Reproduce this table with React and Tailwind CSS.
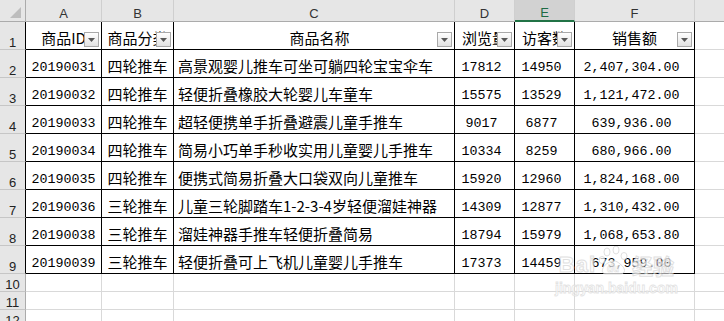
import React from "react";

const data = [
  ["20190031", "四轮推车", "高景观婴儿推车可坐可躺四轮宝宝伞车", "17812", "14950", "2,407,304.00"],
  ["20190032", "四轮推车", "轻便折叠橡胶大轮婴儿车童车", "15575", "13529", "1,121,472.00"],
  ["20190033", "四轮推车", "超轻便携单手折叠避震儿童手推车", "9017", "6877", "639,936.00"],
  ["20190034", "四轮推车", "简易小巧单手秒收实用儿童婴儿手推车", "10334", "8259", "680,966.00"],
  ["20190035", "四轮推车", "便携式简易折叠大口袋双向儿童推车", "15920", "12960", "1,824,168.00"],
  ["20190036", "三轮推车", "儿童三轮脚踏车1-2-3-4岁轻便溜娃神器", "14309", "12877", "1,310,432.00"],
  ["20190038", "三轮推车", "溜娃神器手推车轻便折叠简易", "18794", "15979", "1,068,653.80"],
  ["20190039", "三轮推车", "轻便折叠可上飞机儿童婴儿手推车", "17373", "14459", "673,959.00"],
];

function FilterBtn() {
  return (
    <span className="absolute right-[2px] bottom-[2px] w-[15px] h-[15px] border border-[#a9a9a9] bg-linear-to-b from-white to-[#e2e2e2] flex items-center justify-center">
      <svg width="7" height="4" viewBox="0 0 7 4">
        <path d="M0 0H7L3.5 4Z" fill="#585858" />
      </svg>
    </span>
  );
}

const colHead =
  "flex items-end justify-center pb-[1px] leading-[13px] text-[13px] font-['Liberation_Sans',sans-serif] text-[#333] bg-[#e6e6e6] border-r border-b border-r-[#cfcfcf] border-b-[#ababab]";
const rowHeadBase =
  "flex items-end justify-center leading-[13px] text-[13px] font-['Liberation_Sans',sans-serif] text-[#222] bg-[#e6e6e6] border-b border-b-[#c6c6c6] border-r";
const cjk = "font-['Noto_Sans_CJK_SC',sans-serif] text-[15px] leading-[18px] text-black";
const mono = "font-['Liberation_Mono','Noto_Sans_CJK_SC',monospace] text-[13.33px] leading-[18px] text-black";
const tcell = "relative overflow-hidden whitespace-nowrap flex items-end border-r border-b border-black";
const gcell = "border-r border-b border-[#d9d9d9]";

export default function App() {
  const letters = ["A", "B", "C", "D", "E", "F"];
  return (
    <div className="w-[724px] h-[321px] overflow-hidden bg-white relative">
      <div className="grid grid-cols-[26px_76px_72px_281px_60px_60px_120px_1fr] grid-rows-[22px_repeat(9,28px)_repeat(3,18px)]">
        {/* corner */}
        <div className="relative bg-[#e6e6e6] border-r border-b border-[#ababab]">
          <svg className="absolute right-[4px] bottom-[3px]" width="11" height="11" viewBox="0 0 11 11">
            <path d="M11 0V11H0Z" fill="#bdbdbd" />
          </svg>
        </div>
        {letters.map((l) =>
          l === "E" ? (
            <div
              key={l}
              className="flex items-end justify-center pb-[1px] leading-[13px] text-[13px] font-['Liberation_Sans',sans-serif] text-[#1d6b44] bg-[#d2d2d2] border-r border-r-[#cfcfcf] border-b-2 border-b-[#217346]"
            >
              {l}
            </div>
          ) : (
            <div key={l} className={colHead}>
              {l}
            </div>
          )
        )}
        <div className="bg-[#e6e6e6] border-b border-[#ababab]"></div>

        {/* row 1 headers */}
        <div className={rowHeadBase + " border-r-black"}>1</div>
        <div className={tcell + " justify-center pb-[2px] " + cjk}>
          商品ID
          <FilterBtn />
        </div>
        <div className={tcell + " justify-center pb-[2px] " + cjk}>
          商品分类
          <FilterBtn />
        </div>
        <div className={tcell + " justify-center pb-[2px] pl-[11px] " + cjk}>
          商品名称
          <FilterBtn />
        </div>
        <div className={tcell + " justify-center pb-[2px] " + cjk}>
          浏览量
          <FilterBtn />
        </div>
        <div className={tcell + " justify-center pb-[2px] " + cjk}>
          访客数
          <FilterBtn />
        </div>
        <div className={tcell + " justify-center pb-[2px] " + cjk}>
          销售额
          <FilterBtn />
        </div>
        <div className="border-b border-[#d9d9d9]"></div>

        {data.map((r, i) => (
          <React.Fragment key={r[0]}>
            <div className={rowHeadBase + " border-r-black"}>{i + 2}</div>
            <div className={tcell + " justify-center " + mono}>{r[0]}</div>
            <div className={tcell + " justify-center pb-[2px] " + cjk}>{r[1]}</div>
            <div className={tcell + " justify-start pl-[4px] pb-[2px] " + cjk}>{r[2]}</div>
            <div className={tcell + " justify-center pr-[6px] " + mono}>{r[3]}</div>
            <div className={tcell + " justify-center pr-[6px] " + mono}>{r[4]}</div>
            <div className={tcell + " justify-center pr-[6px] " + mono}>{r[5]}</div>
            <div className="border-b border-[#d9d9d9]"></div>
          </React.Fragment>
        ))}

        {[10, 11, 12].map((n) => (
          <React.Fragment key={n}>
            <div className={rowHeadBase + " border-r-[#ababab]"}>{n}</div>
            <div className={gcell}></div>
            <div className={gcell}></div>
            <div className={gcell}></div>
            <div className={gcell}></div>
            <div className={gcell}></div>
            <div className={gcell}></div>
            <div className="border-b border-[#d9d9d9]"></div>
          </React.Fragment>
        ))}
      </div>

      {/* watermark */}
      <div className="absolute left-[555px] top-[246px] flex flex-col items-center pointer-events-none opacity-75">
        <div className="flex items-end gap-[2px] font-['Liberation_Sans',sans-serif] font-bold text-white [-webkit-text-stroke:1px_#d6d6d6]">
          <span className="text-[22px] leading-[24px] tracking-[1px]">Bai</span>
          <svg width="32" height="30" viewBox="0 0 32 30" className="mb-[1px]">
            <g fill="white" stroke="#d6d6d6" strokeWidth="1">
              <ellipse cx="9" cy="6" rx="3" ry="4" />
              <ellipse cx="18" cy="4" rx="3" ry="4" />
              <ellipse cx="26" cy="10" rx="3" ry="3.5" />
              <ellipse cx="4" cy="14" rx="3" ry="3.5" />
              <path d="M8 28C2 28 4 20 10 17C14 14 18 14 22 18C28 22 28 28 22 28Z" />
            </g>
            <text x="15" y="26" textAnchor="middle" fontSize="10" fontFamily="Liberation Sans" fill="white" stroke="#d6d6d6" strokeWidth="0.6">du</text>
          </svg>
          <span className="text-[21px] leading-[24px] font-['Noto_Sans_CJK_SC',sans-serif]">经验</span>
        </div>
        <div className="text-[14px] leading-[16px] mt-[3px] font-['Liberation_Sans',sans-serif] font-bold text-white [-webkit-text-stroke:0.8px_#dadada]">
          jingyan.baidu.com
        </div>
      </div>
    </div>
  );
}
